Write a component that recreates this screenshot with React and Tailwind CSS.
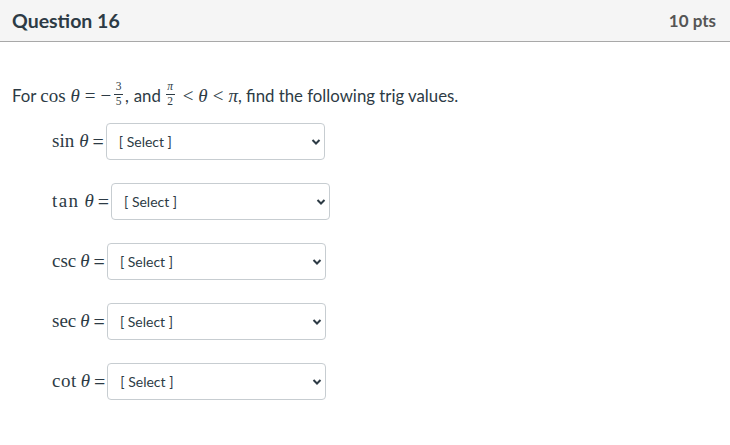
import React from "react";

const serif = { fontFamily: '"Liberation Serif", "DejaVu Serif", serif' };

function Frac({ n, d, italicN, cls }) {
  return (
    <span className={"inline-flex flex-col items-center align-middle leading-none text-[11.5px] relative top-[-2px] " + cls} style={serif}>
      <span className={"px-[1.5px] pb-[1px] border-b border-[#2d3b45] " + (italicN ? "italic" : "")}>{n}</span>
      <span className="pt-[1px]">{d}</span>
    </span>
  );
}

function Row({ fn, gap, track }) {
  return (
    <div className="flex items-center h-[37px] pl-[52px]">
      <span className="text-[19px] text-[#2d3b45] whitespace-pre flex items-center" style={serif}>
        <span className={track}>{fn}</span><span className={"italic " + gap}>θ</span><span className="ml-[4px] text-[20px]">=</span>
      </span>
      <div className="relative ml-[2px] w-[219px] h-[37px] border border-[#c7cdd1] rounded-[4px] bg-white flex items-center">
        <span className="pl-[12px] text-[14px] text-[#2d3b45]">[ Select ]</span>
        <svg className="absolute right-[3px] top-[14px]" width="10" height="8" viewBox="0 0 10 8">
          <path d="M1.5 2 L5 5.5 L8.5 2" fill="none" stroke="#2d3b45" strokeWidth="2" />
        </svg>
      </div>
    </div>
  );
}

export default function App() {
  return (
    <div className="w-[730px] h-[445px] bg-white" style={{ fontFamily: 'Lato, "Liberation Sans", sans-serif' }}>
      <div className="h-[42px] bg-[#f5f5f5] border-b border-[#a8a8a8] flex items-center justify-between pl-[12px] pr-[14px]">
        <span className="text-[19.5px] font-bold text-[#2d3b45]">Question 16</span>
        <span className="text-[17px] font-bold text-[#555]">10 pts</span>
      </div>
      <div className="pl-[12px] pt-[43px] text-[16.8px] text-[#2d3b45] flex items-center h-[22px] box-content whitespace-pre">
        <span>For </span>
        <span className="text-[19px]" style={serif}>cos <span className="italic">θ</span><span className="mx-[5px]">=</span>−</span>
        <Frac n="3" d="5" cls="ml-[3px] mr-[2px]" />
        <span>,</span>
        <span className="ml-[5px]">and</span>
        <Frac n="π" d="2" italicN cls="ml-[5px]" />
        <span className="text-[19px]" style={serif}><span className="ml-[8px] mr-[5px]">&lt;</span><span className="italic">θ</span><span className="mx-[5px]">&lt;</span><span className="italic">π</span></span>
        <span>, find the following trig values.</span>
      </div>
      <div className="mt-[16px] flex flex-col gap-[23px]">
        <Row fn="sin" gap="ml-[5px]" track="" />
        <Row fn="tan" gap="ml-[5px]" track="tracking-[1.4px]" />
        <Row fn="csc" gap="ml-[4px]" track="" />
        <Row fn="sec" gap="ml-[4px]" track="" />
        <Row fn="cot" gap="ml-[4px]" track="tracking-[0.5px]" />
      </div>
    </div>
  );
}
